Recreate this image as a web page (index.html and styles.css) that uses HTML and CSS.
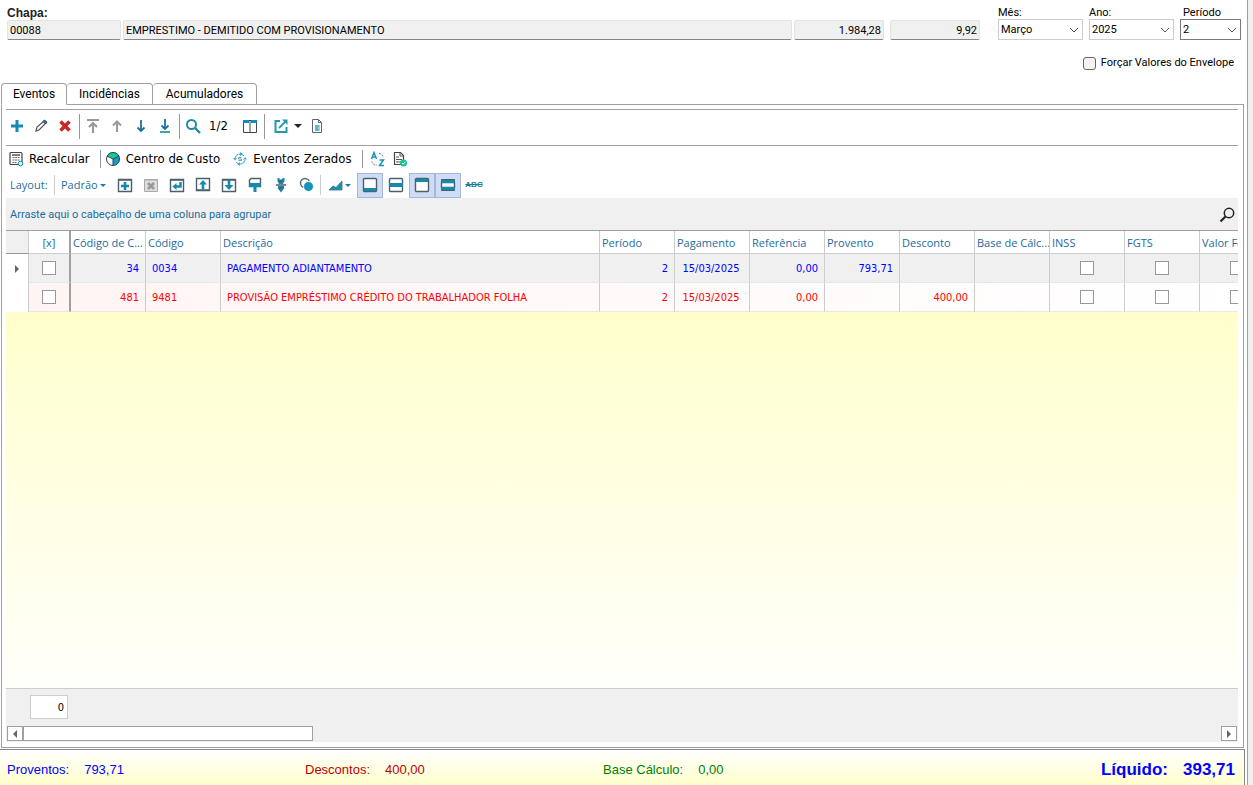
FILE: index.html
```html
<!DOCTYPE html>
<html lang="pt-BR">
<head>
    <meta charset="UTF-8">
    <meta name="viewport" content="width=device-width, initial-scale=1.0">
    <title>Envelope de Pagamento</title>
    <link rel="stylesheet" href="styles.css">
</head>
<body>

<div class="window">
    <!-- Employee and period -->
    <header class="header">
        <div class="employee">
            <label class="employee-label" for="chapa">Chapa:</label>
            <div class="employee-fields">
                <input class="field field-code" id="chapa" type="text" value="00088" readonly>
                <input class="field field-name" type="text" value="EMPRESTIMO - DEMITIDO COM PROVISIONAMENTO" aria-label="Nome" readonly>
                <input class="field field-number" type="text" value="1.984,28" aria-label="Salário" readonly>
                <input class="field field-number field-last" type="text" value="9,92" aria-label="Valor hora" readonly>
            </div>
        </div>
        <div class="period">
            <div class="period-fields">
                <div class="combo">
                    <label for="mes">Mês:</label>
                    <div class="combo-box">
                        <select id="mes"><option>Março</option></select>
                        <svg class="chevron" viewBox="0 0 10 6"><path d="M1 1l4 4 4-4"/></svg>
                    </div>
                </div>
                <div class="combo">
                    <label for="ano">Ano:</label>
                    <div class="combo-box">
                        <select id="ano"><option>2025</option></select>
                        <svg class="chevron" viewBox="0 0 10 6"><path d="M1 1l4 4 4-4"/></svg>
                    </div>
                </div>
                <div class="combo combo-small">
                    <label for="periodo">Período</label>
                    <div class="combo-box">
                        <select id="periodo"><option>2</option></select>
                        <svg class="chevron" viewBox="0 0 10 6"><path d="M1 1l4 4 4-4"/></svg>
                    </div>
                </div>
            </div>
            <label class="force"><input class="check check-round" type="checkbox">Forçar Valores do Envelope</label>
        </div>
    </header>

    <!-- Tabs -->
    <nav class="tabs" role="tablist">
        <button class="tab active" role="tab" aria-selected="true">Eventos</button>
        <button class="tab tab-wide" role="tab">Incidências</button>
        <button class="tab tab-wider" role="tab">Acumuladores</button>
    </nav>

    <main class="page">
        <!-- Record toolbar -->
        <div class="toolbar toolbar-nav">
            <button class="tool" aria-label="Incluir"><svg viewBox="0 0 16 16"><path d="M8 2v12M2 8h12" stroke="#1389b5" stroke-width="3" fill="none"/></svg></button>
            <button class="tool" aria-label="Editar"><svg viewBox="0 0 16 16"><path d="M3 13l1-4 7-6 2 2-7 7z" fill="#fff" stroke="#555" stroke-width="1.2"/><path d="M10 3.500l1.500-1.500 2.500 2-1.500 2z" fill="#1389b5" stroke="#446"/></svg></button>
            <button class="tool" aria-label="Excluir"><svg viewBox="0 0 16 16"><path d="M3.500 3.500l9 9M12.500 3.500l-9 9" stroke="#c62828" stroke-width="3.600" fill="none"/></svg></button>
            <span class="sep"></span>
            <button class="tool" aria-label="Primeiro"><svg viewBox="0 0 16 16"><path d="M2 2h12M8 15V5M4 9l4-4 4 4" stroke="#999" stroke-width="2.200" fill="none"/></svg></button>
            <button class="tool" aria-label="Anterior"><svg viewBox="0 0 16 16"><path d="M8 14V4M4 7.500l4-4 4 4" stroke="#999" stroke-width="2" fill="none"/></svg></button>
            <button class="tool" aria-label="Próximo"><svg viewBox="0 0 16 16"><path d="M8 2v11M4.500 9.500L8 13l3.500-3.500" stroke="#1c6f9c" stroke-width="1.800" fill="none"/></svg></button>
            <button class="tool" aria-label="Último"><svg viewBox="0 0 16 16"><path d="M8 1v10M4.500 7.500L8 11l3.500-3.500" stroke="#1c6f9c" stroke-width="1.800" fill="none"/><path d="M3 14h10" stroke="#239ba4" stroke-width="1.800"/></svg></button>
            <span class="sep"></span>
            <button class="tool" aria-label="Localizar"><svg viewBox="0 0 16 16"><circle cx="6.500" cy="6.500" r="4.500" fill="none" stroke="#218aa2" stroke-width="2"/><path d="M10 10l5 5" stroke="#218aa2" stroke-width="2.400"/></svg></button>
            <span class="counter">1/2</span>
            <button class="tool" aria-label="Colunas"><svg viewBox="0 0 16 16"><path d="M1.500 2.500h13v12h-13zM8 3v11" fill="#fff" stroke="#444"/><path d="M1 2h6v3H1zM9 2h6v3H9z" fill="#0b8fc0"/></svg></button>
            <span class="sep"></span>
            <button class="tool tool-drop" aria-label="Exportar"><svg viewBox="0 0 16 16"><path d="M7 3H2.500v11h11V9" fill="none" stroke="#2498ad" stroke-width="2"/><path d="M6 10l7-7" stroke="#2498ad" stroke-width="1.800"/><path d="M9 1.500h5.500V7z" fill="#2498ad"/></svg><span class="caret caret-dark"></span></button>
            <button class="tool" aria-label="Relatório"><svg viewBox="0 0 16 16"><path d="M3.500 1.500h6l3 3v10h-9z" fill="#fff" stroke="#567"/><path d="M9.500 1.500v3h3" fill="none" stroke="#567"/><path d="M6 7h5v6H6z" fill="#9ed6df"/><path d="M6 8h4M6 10h3M6 12h4" stroke="#2694a9"/></svg></button>
        </div>

        <!-- Process toolbar -->
        <div class="toolbar toolbar-process">
            <button class="action"><svg viewBox="0 0 16 16"><path d="M3 1.500h10a1 1 0 0 1 1 1v11H3a1 1 0 0 1-1-1v-10a1 1 0 0 1 1-1z" fill="#fff" stroke="#444" stroke-width="1.200"/><path d="M4 4h8" stroke="#555" stroke-width="1.500"/><path d="M4.500 6.500h7M4.500 9h7M4.500 11.500h4" stroke="#666" stroke-dasharray="2 .6"/><circle cx="12.500" cy="12.500" r="2.300" fill="#d3f1f7" stroke="#1389b5"/></svg>Recalcular</button>
            <span class="sep"></span>
            <button class="action"><svg viewBox="0 0 16 16"><circle cx="8" cy="8" r="6.500" fill="#fff"/><path d="M8 8L2 5a6.500 6.500 0 0 1 12 0z" fill="#16c995"/><path d="M8 8l6-3a6.500 6.500 0 0 1-6 9.500z" fill="#159bcb"/><path d="M8 14.500V8L2 5M8 8l6-3" fill="none" stroke="#33434b"/><circle cx="8" cy="8" r="6.500" fill="none" stroke="#33434b"/></svg>Centro de Custo</button>
            <button class="action action-gap"><svg viewBox="0 0 16 16"><path d="M3 7a5 5 0 0 1 9-2M13 9a5 5 0 0 1-9 2" fill="none" stroke="#28b8d5"/><path d="M1 7h4L3 9.500zM11 8.500h4L13 6zM8 1l3 2-3 2zM8 11v4l-3-2z" fill="#28b8d5"/><path d="M9.500 6.500h-3V8h3v1.500h-3" fill="none" stroke="#778" stroke-width=".8"/></svg>Eventos Zerados</button>
            <span class="sep"></span>
            <button class="tool" aria-label="Ordenar"><svg viewBox="0 0 16 16"><path d="M1.500 8L4 1.500 6.500 8M2.500 6h3M9.500 9h4L9.500 14.500h4.500" fill="none" stroke="#1698b7" stroke-width="1.500"/><path d="M9 2.500a4 4 0 0 1 4 4M2 10.500a4 4 0 0 0 5 3.500" fill="none" stroke="#777" stroke-dasharray="2 1"/></svg></button>
            <button class="tool" aria-label="Validar"><svg viewBox="0 0 16 16"><path d="M2.500 1.500h6l3 3v9h-9z" fill="#fff" stroke="#444" stroke-width="1.200"/><path d="M8 1.500V5h3.500M4 6h3M4 8.500h6M4 11h5" fill="none" stroke="#555"/><circle cx="11.500" cy="12" r="3.500" fill="#14c890"/><path d="M10 12l1.200 1.200 2-2.300" stroke="#fff" fill="none"/></svg></button>
        </div>

        <!-- Layout toolbar -->
        <div class="toolbar toolbar-layout">
            <span class="layout-label">Layout:</span>
            <span class="sep sep-light"></span>
            <button class="layout-name">Padrão<span class="caret"></span></button>
            <button class="tile" aria-label="Novo layout"><svg viewBox="0 0 16 16"><path class="frame" d="M1.500 2.500h13v12h-13z"/><path class="frame" d="M1 3h14"/><path class="ink" d="M8 5v8M4 9h8" stroke-width="2.600"/></svg></button>
            <button class="tile" aria-label="Excluir layout" disabled><svg viewBox="0 0 16 16"><path d="M1.500 2.500h13v12h-13z" fill="#ddd" stroke="#aaa"/><path d="M1 3h14" stroke="#aaa"/><path d="M5 6l6 6M11 6l-6 6" stroke="#999" stroke-width="2.600"/></svg></button>
            <button class="tile" aria-label="Restaurar layout"><svg viewBox="0 0 16 16"><path class="frame" d="M1.500 2.500h13v12h-13z"/><path class="frame" d="M1 3h14"/><path class="ink" d="M11.500 5v4.500H6" stroke-width="2.400"/><path class="fill" d="M7.500 6v7L3.500 9.500z"/></svg></button>
            <button class="tile" aria-label="Importar layout"><svg viewBox="0 0 16 16"><path class="frame" d="M1.500 1.500h13v12h-13z"/><path class="frame" d="M1 13h14"/><path class="ink" d="M8 12V6" stroke-width="2.600"/><path class="fill" d="M4 7.500L8 3l4 4.500z"/></svg></button>
            <button class="tile" aria-label="Exportar layout"><svg viewBox="0 0 16 16"><path class="frame" d="M1.500 2.500h13v12h-13z"/><path class="frame" d="M1 3h14"/><path class="ink" d="M8 3v7" stroke-width="2.600"/><path class="fill" d="M3.500 8L8 13l4.500-5z"/></svg></button>
            <button class="tile" aria-label="Formatar"><svg viewBox="0 0 16 16"><path class="frame" d="M4 1.500h9.500v8h-11V3z"/><path class="fill" d="M2 6h12v2.500L12.500 10H9.500v5h-3v-5h-3L2 8.500z"/></svg></button>
            <button class="tile" aria-label="Ajustar colunas"><svg viewBox="0 0 16 16"><path class="fill" d="M4.500 1h2v1.500h3V1h2v3l-1.500 3H6L4.500 4zM5 9h6v2.500L8 15.500l-3-4z"/><path d="M3 8h10M6 5l4-2M6 12l4-2" stroke="#4d5f68" stroke-width="1.400"/></svg></button>
            <button class="tile" aria-label="Filtro"><svg viewBox="0 0 16 16"><circle cx="6" cy="6" r="4.500" fill="#fff" stroke="#5a6870" stroke-width="1.500"/><circle cx="9.500" cy="9.500" r="5" fill="#1593b7" stroke="#fff"/></svg></button>
            <span class="sep sep-light"></span>
            <button class="tile tile-drop" aria-label="Gráfico"><svg viewBox="0 0 16 16"><path d="M1 13l4-4 3 1.500L14 4v9z" fill="#1593b7" stroke="#4a717c" stroke-width=".8"/></svg><span class="caret"></span></button>
            <button class="tile on" aria-label="Rodapé"><svg viewBox="0 0 16 16"><rect class="frame" x="1.500" y="1.500" width="13" height="13" rx="1"/><path class="fill" d="M2 11h12v3H2z"/></svg></button>
            <button class="tile" aria-label="Rodapé do grupo"><svg viewBox="0 0 16 16"><rect class="frame" x="1.500" y="1.500" width="13" height="13" rx="1"/><path class="fill" d="M1 6h14v4H1z"/></svg></button>
            <button class="tile on" aria-label="Painel de agrupamento"><svg viewBox="0 0 16 16"><rect class="frame" x="1.500" y="1.500" width="13" height="13" rx="1"/><path class="fill" d="M2 2h12v3H2z"/></svg></button>
            <button class="tile on tile-joined" aria-label="Linhas alternadas"><svg viewBox="0 0 16 16"><path class="frame" d="M1.500 5.500h13v5h-13z"/><path class="fill" d="M1 2.500h14v3.500H1zM1 10h14v3.500H1z"/><path d="M1.500 3.500v-1h13v1M1.500 12.500v1h13v-1" fill="none" stroke="#4d5f68"/></svg></button>
            <button class="tile tile-abc" aria-label="Fonte">ABC</button>
        </div>

        <div class="group-panel">
            <span>Arraste aqui o cabeçalho de uma coluna para agrupar</span>
            <button class="tool" aria-label="Pesquisar"><svg viewBox="0 0 16 16"><circle cx="10" cy="6" r="4.700" fill="none" stroke="#222" stroke-width="1.500"/><path d="M6.500 9.500L1.500 14.500" stroke="#222" stroke-width="2.200"/></svg></button>
        </div>

        <!-- Events grid -->
        <div class="grid">
            <table class="events">
                <colgroup>
                    <col class="col-mark"><col class="col-check"><col class="col"><col class="col"><col class="col-desc">
                    <col class="col"><col class="col"><col class="col"><col class="col"><col class="col"><col class="col"><col class="col"><col class="col"><col class="col">
                </colgroup>
                <thead>
                    <tr>
                        <th class="mark"></th>
                        <th class="pick">[x]</th>
                        <th>Código de C...</th>
                        <th>Código</th>
                        <th>Descrição</th>
                        <th>Período</th>
                        <th>Pagamento</th>
                        <th>Referência</th>
                        <th>Provento</th>
                        <th>Desconto</th>
                        <th>Base de Cálc...</th>
                        <th>INSS</th>
                        <th>FGTS</th>
                        <th>Valor Forçado</th>
                    </tr>
                </thead>
                <tbody>
                    <tr class="earning">
                        <td class="mark"><span class="arrow"></span></td>
                        <td class="pick"><input class="check" type="checkbox" aria-label="Selecionar 0034"></td>
                        <td class="num">34</td>
                        <td>0034</td>
                        <td>PAGAMENTO ADIANTAMENTO</td>
                        <td class="num">2</td>
                        <td class="date">15/03/2025</td>
                        <td class="num">0,00</td>
                        <td class="num">793,71</td>
                        <td></td>
                        <td></td>
                        <td class="flag"><input class="check" type="checkbox" aria-label="INSS"></td>
                        <td class="flag"><input class="check" type="checkbox" aria-label="FGTS"></td>
                        <td class="flag"><input class="check" type="checkbox" aria-label="Valor Forçado"></td>
                    </tr>
                    <tr class="deduction">
                        <td class="mark"></td>
                        <td class="pick"><input class="check" type="checkbox" aria-label="Selecionar 9481"></td>
                        <td class="num">481</td>
                        <td>9481</td>
                        <td>PROVISÃO EMPRÉSTIMO CRÉDITO DO TRABALHADOR FOLHA</td>
                        <td class="num">2</td>
                        <td class="date">15/03/2025</td>
                        <td class="num">0,00</td>
                        <td></td>
                        <td class="num">400,00</td>
                        <td></td>
                        <td class="flag"><input class="check" type="checkbox" aria-label="INSS"></td>
                        <td class="flag"><input class="check" type="checkbox" aria-label="FGTS"></td>
                        <td class="flag"><input class="check" type="checkbox" aria-label="Valor Forçado"></td>
                    </tr>
                </tbody>
            </table>
        </div>

        <div class="grid-footer">
            <output class="selected-count">0</output>
            <div class="scrollbar">
                <button class="scroll-button" aria-label="Rolar para a esquerda"><span class="arrow arrow-left"></span></button>
                <div class="scroll-track"><div class="scroll-thumb"></div></div>
                <button class="scroll-button" aria-label="Rolar para a direita"><span class="arrow"></span></button>
            </div>
        </div>
    </main>

    <!-- Totals -->
    <footer class="totals">
        <div class="total total-earnings"><span>Proventos:</span><span>793,71</span></div>
        <div class="total total-deductions"><span>Descontos:</span><span>400,00</span></div>
        <div class="total total-base"><span>Base Cálculo:</span><span>0,00</span></div>
        <div class="total-net"><span>Líquido:</span><span>393,71</span></div>
    </footer>
</div>

</body>
</html>
```
FILE: styles.css
```css
/* --- Base --- */
* {
    box-sizing: border-box;
}

body {
    margin: 0;
    background-color: #f0f0f0;
    font-family: "DejaVu Sans Condensed", "DejaVu Sans", sans-serif;
    font-size: 11px;
    line-height: 14px;
    color: #000;
}

button,
input,
select {
    font: inherit;
    color: inherit;
}

button {
    padding: 0;
    border: none;
    background: none;
}

.window {
    display: flex;
    flex-direction: column;
    min-height: 100vh;
    margin-right: 5px;
    background-color: #fff;
    border-right: 1px solid #a0a0a0;
}

/* --- Header --- */
.header {
    display: flex;
    justify-content: space-between;
    gap: 18px;
    padding: 5px 6px 0 7px;
    font-family: Roboto, Arial, sans-serif;
    font-size: 11px;
}

.employee {
    flex: 1;
}

.employee-label {
    display: block;
    height: 15px;
    line-height: 16px;
    font-family: "Liberation Sans", Arial, sans-serif;
    font-size: 12px;
    font-weight: bold;
    color: #222;
}

.employee-fields {
    display: flex;
    gap: 2px;
}

.field {
    width: 90px;
    height: 20px;
    padding: 0 2px;
    background-color: #f0f0f0;
    border: 1px solid #e3e3e3;
    border-bottom-color: #868686;
    border-radius: 2px;
}

.field-code {
    width: 114px;
}

.field-name {
    flex: 1;
    min-width: 0;
}

.field-number {
    text-align: right;
}

.field-last {
    margin-left: 4px;
}

.period-fields {
    display: flex;
    gap: 6px;
}

.combo {
    width: 85px;
}

.combo label {
    display: block;
    height: 14px;
    line-height: 16px;
}

.combo-small {
    width: 61px;
}

.combo-small label {
    padding-left: 3px;
}

.combo-box {
    position: relative;
}

.combo select {
    width: 100%;
    height: 21px;
    padding: 1px 2px 0;
    appearance: none;
    background-color: #fff;
    border: 1px solid #ccc;
    border-radius: 0;
}

.combo-small select {
    border-color: #7a7a7a;
}

.chevron {
    position: absolute;
    right: 4px;
    top: 8px;
    width: 10px;
    height: 6px;
    fill: none;
    stroke: #555;
    pointer-events: none;
}

.force {
    display: flex;
    align-items: center;
    justify-content: flex-end;
    gap: 5px;
    margin: 16px 7px 0 0;
}

/* --- Checkboxes --- */
.check {
    appearance: none;
    display: block;
    width: 14px;
    height: 14px;
    margin: 0;
    background-color: #fff;
    border: 1px solid #999;
}

.check-round {
    width: 13px;
    height: 13px;
    background-color: #f3f3f3;
    border-color: #666;
    border-radius: 3px;
}

/* --- Tabs --- */
.tabs {
    display: flex;
    height: 22px;
    margin: 13px 0 -1px 1px;
}

.tab {
    width: 66px;
    background-color: #fff;
    border: 1px solid #a0a0a0;
    border-radius: 4px 4px 0 0;
    font-family: Roboto, Arial, sans-serif;
    font-size: 12px;
}

.tab + .tab {
    border-left: none;
}

.tab-wide {
    width: 86px;
}

.tab-wider {
    width: 104px;
}

.tab.active {
    border-bottom-color: #fff;
    z-index: 1;
}

/* --- Tab page --- */
.page {
    flex: 1;
    display: flex;
    flex-direction: column;
    min-width: 0;
    margin: 0 3px 1px 1px;
    padding: 4px 5px 5px 4px;
    border: 1px solid #a0a0a0;
}

/* --- Toolbars --- */
.toolbar {
    display: flex;
    align-items: center;
}

.toolbar-nav {
    gap: 2px;
    height: 37px;
    padding-bottom: 3px;
    border-top: 1px solid #a0a0a0;
    border-bottom: 1px solid #a0a0a0;
}

.tool {
    display: flex;
    align-items: center;
    justify-content: center;
    width: 22px;
    height: 22px;
}

.tool svg,
.action svg,
.tile svg {
    flex: none;
    width: 16px;
    height: 16px;
}

.tool-drop {
    gap: 5px;
    width: 37px;
    padding-left: 3px;
}

.sep {
    width: 1px;
    height: 25px;
    margin-left: 1px;
    background-color: #999;
}

.counter {
    width: 31px;
    padding-left: 3px;
    font-size: 13px;
}

.caret {
    border: 3px solid transparent;
    border-top-color: #1a7ba6;
    border-bottom: none;
}

.caret-dark {
    border-width: 4px;
    border-top-color: #222;
    border-bottom: none;
}

.toolbar-process {
    height: 26px;
    padding-left: 2px;
}

.toolbar-process .sep {
    height: 18px;
    margin: 0 4px 0 10px;
}

.action {
    display: flex;
    align-items: center;
    gap: 5px;
    font-size: 13px;
    white-space: nowrap;
}

.action-gap {
    margin-left: 12px;
}

.toolbar-layout {
    height: 26px;
    font-family: "Open Sans", sans-serif;
    color: #1f6f9f;
}

.layout-label {
    width: 48px;
    padding-left: 4px;
}

.sep-light {
    height: 20px;
    margin: 0;
    background-color: #ccc;
}

.layout-name {
    display: flex;
    align-items: center;
    gap: 2px;
    width: 57px;
    padding-left: 6px;
}

.tile {
    display: flex;
    align-items: center;
    justify-content: center;
    width: 26px;
    height: 25px;
}

.tile-drop {
    gap: 1px;
    width: 36px;
}

.tile.on {
    background-color: #cfdcf5;
    border: 1px solid #a7b7dc;
}

.tile-joined {
    border-left: none;
}

.tile-abc {
    font-family: "Liberation Sans", Arial, sans-serif;
    font-size: 8px;
    font-weight: bold;
    color: #1f7d99;
    text-decoration: line-through;
}

.frame {
    fill: #fff;
    stroke: #4d5f68;
    stroke-width: 1.4px;
}

.ink {
    fill: none;
    stroke: #1589ad;
}

.fill {
    fill: #1589ad;
}

/* --- Grid --- */
.group-panel {
    display: flex;
    align-items: center;
    justify-content: space-between;
    height: 32px;
    padding: 2px 0 0 4px;
    background-color: #f0f0f0;
    font-family: Roboto, sans-serif;
    color: #1a6d9c;
}

.grid {
    flex: 1;
    overflow: hidden;
    background: linear-gradient(#ffffcc 80px, #fffffa);
    border-top: 1px solid #a0a0a0;
}

.events {
    width: 1269px;
    table-layout: fixed;
    border-spacing: 0;
}

.col-mark {
    width: 23px;
}

.col-check {
    width: 42px;
}

.col {
    width: 75px;
}

.col-desc {
    width: 379px;
}

.events th,
.events td {
    overflow: hidden;
    white-space: nowrap;
    border-right: 1px solid #ccc;
}

.events th {
    height: 23px;
    padding: 2px 2px 0;
    background-color: #fff;
    border-bottom: 1px solid #ccc;
    font-family: "Open Sans", sans-serif;
    font-weight: normal;
    color: #1a6d9c;
    text-align: left;
}

.events td {
    height: 29px;
    padding: 2px 6px 0;
    border-bottom: 1px solid #e8e8e8;
}

.events .pick {
    border-right: 2px solid #a0a0a0;
    text-align: center;
}

.events td.pick,
.events td.mark,
.events td.flag {
    padding: 0;
}

.events th.mark {
    background-color: #f0f0f0;
    border-bottom-color: #999;
}

.events td.mark {
    background-color: #fff;
    border-bottom: none;
}

.events .num {
    text-align: right;
}

.events .date {
    padding: 2px 2px 0 0;
    text-align: center;
}

.events .check {
    margin: 0 auto;
}

.earning {
    background-color: #f0f0f0;
    color: #00f;
}

.deduction {
    background: linear-gradient(to right, #fff4f4, #fff);
    color: #f00;
}

.arrow {
    display: block;
    width: 0;
    margin: 0 auto;
    border: 4px solid transparent;
    border-left-color: #666;
    border-right: none;
}

.arrow-left {
    border-right: 4px solid #666;
    border-left: none;
}

/* --- Grid footer and scrollbar --- */
.grid-footer {
    padding: 6px 1px 1px;
    background-color: #f0f0f0;
    border-top: 1px solid #ccc;
}

.selected-count {
    display: block;
    width: 38px;
    margin-left: 23px;
    padding: 5px 3px 3px;
    background-color: #fff;
    border: 1px solid #ccc;
    text-align: right;
}

.scrollbar {
    display: flex;
    height: 15px;
    margin-top: 7px;
}

.scroll-button {
    width: 16px;
    background-color: #fff;
    border: 1px solid #a0a0a0;
}

.scroll-track {
    flex: 1;
}

.scroll-thumb {
    width: 24.2%;
    height: 15px;
    background-color: #fff;
    border: 1px solid #a0a0a0;
}

/* --- Totals --- */
.totals {
    display: flex;
    align-items: center;
    height: 36px;
    margin-right: 2px;
    padding: 5px 9px 0 7px;
    background: linear-gradient(#fff, #ffffcc);
    border-top: 1px solid #868686;
    border-right: 1px solid #868686;
    font-family: "Liberation Sans", Arial, sans-serif;
    font-size: 13px;
}

.total {
    display: flex;
    flex: 0 0 298px;
    gap: 15px;
}

.total-earnings {
    color: #00f;
}

.total-deductions {
    color: #c00000;
}

.total-base {
    color: #008000;
}

.total-net {
    display: flex;
    gap: 15px;
    margin-left: auto;
    font-size: 17px;
    font-weight: bold;
    color: #00f;
}
```
